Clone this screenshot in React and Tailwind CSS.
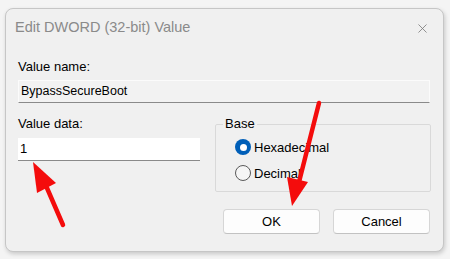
import { X } from "lucide-react";

const FONT = { fontFamily: "'Liberation Sans', Arial, sans-serif" };

function Radio({ checked, label }) {
  return (
    <div className="flex items-center gap-[3px] h-[16px]">
      {checked ? (
        <span className="w-[16px] h-[16px] rounded-full bg-[#005fb8] flex items-center justify-center">
          <span className="w-[7px] h-[7px] rounded-full bg-white" />
        </span>
      ) : (
        <span className="w-[16px] h-[16px] rounded-full border border-[#5a5a5a] bg-[#f5f5f5]" />
      )}
      <span className="text-[13px] text-black leading-none">{label}</span>
    </div>
  );
}

function Button({ children }) {
  return (
    <button className="w-[97px] h-[25px] rounded-[4px] bg-[#fdfdfd] border border-[#d6d6d6] border-b-[#c2c2c2] text-[13px] text-black">
      {children}
    </button>
  );
}

export default function App() {
  return (
    <div className="relative w-[450px] h-[259px] bg-[#f4f4f4] pt-[8px] pl-[5px] overflow-hidden" style={FONT}>
      {/* Dialog */}
      <div className="w-[439px] h-[244px] bg-[#f0f0f0] border border-[#c6c6c6] rounded-[8px] shadow-[1px_2px_4px_rgba(0,0,0,0.18)] flex flex-col">
        {/* Title bar */}
        <div className="h-[38px] flex items-center justify-between pl-[9px] pr-[13px]">
          <span className="text-[14.5px] text-[#8a8a8a]">Edit DWORD (32-bit) Value</span>
          <X className="w-[15px] h-[15px] text-[#7a7a7a]" strokeWidth={1.3} />
        </div>

        {/* Body */}
        <div className="flex flex-col px-[12px] pt-[12px]">
          <span className="text-[13px] leading-[16px] text-black">Value name:</span>
          <div className="mt-[5px] w-[412px] h-[23px] bg-[#f2f2f2] border border-[#fbfbfb] border-b-[#8a8a8a] flex items-center pl-[2px] text-[12.5px] text-black">
            BypassSecureBoot
          </div>

          <div className="mt-[13px] flex">
            <div className="flex flex-col w-[182px]">
              <span className="text-[13px] leading-[16px] text-black">Value data:</span>
              <div className="mt-[6px] h-[23px] bg-white border-b border-[#8a8a8a] flex items-center pl-[2px] text-[13px] text-black">
                1
              </div>
            </div>

            <fieldset className="ml-[15px] w-[216px] h-[76px] border border-[#d9d9d9] rounded-[2px]">
              <legend className="ml-[7px] px-[2px] text-[13px] leading-[16px] text-black">Base</legend>
              <div className="flex flex-col gap-[10px] pt-[7px] pl-[19px]">
                <Radio checked label="Hexadecimal" />
                <Radio label="Decimal" />
              </div>
            </fieldset>
          </div>

          <div className="mt-[17px] flex justify-end gap-[13px] pr-[1px]">
            <Button>OK</Button>
            <Button>Cancel</Button>
          </div>
        </div>
      </div>

      {/* Annotation arrows */}
      <svg className="absolute inset-0 pointer-events-none" width="450" height="259" viewBox="0 0 450 259">
        <line x1="63" y1="225" x2="47" y2="188" stroke="#f40c0c" strokeWidth="4.5" strokeLinecap="round" />
        <polygon points="33,162 37,193 56,183" fill="#f40c0c" />
        <line x1="319" y1="103" x2="299" y2="182" stroke="#f40c0c" strokeWidth="4.5" strokeLinecap="round" />
        <polygon points="287,177 308,182 292,206" fill="#f40c0c" />
      </svg>
    </div>
  );
}
